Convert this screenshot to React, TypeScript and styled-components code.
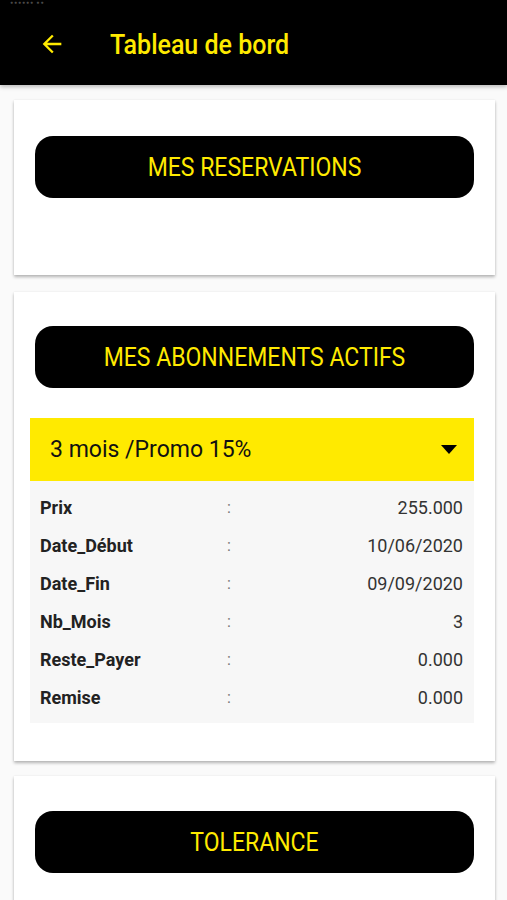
import * as React from 'react';
import styled, { createGlobalStyle } from 'styled-components';

const YELLOW = '#ffea00';

const GlobalStyle = createGlobalStyle`
	html, body {
		margin: 0;
		padding: 0;
		background: #fafafa;
		font-family: Roboto, 'Liberation Sans', Arial, sans-serif;
	}
	* { box-sizing: border-box; }
`;

const Screen = styled.div`
	width: 507px;
	min-height: 900px;
	background: #fafafa;
	overflow: hidden;
`;

const Header = styled.header`
	height: 85px;
	background: #000;
	display: flex;
	align-items: center;
	padding: 3px 0 0 38px;
	position: relative;
	box-shadow: 0 2px 4px rgba(0, 0, 0, 0.25);
`;

const StatusText = styled.span`
	position: absolute;
	top: 0;
	left: 10px;
	font-size: 5px;
	line-height: 5px;
	letter-spacing: 1px;
	color: #4a4a4a;
`;

const Title = styled.h1`
	margin: 0 0 0 44px;
	font-size: 25px;
	font-weight: 500;
	color: ${YELLOW};
	line-height: 1;
	transform: scaleY(1.12);
`;

const Content = styled.main`
	display: flex;
	flex-direction: column;
	padding: 15px 12px 0 14px;
`;

const Card = styled.section<{ $pad: string; $gap?: number }>`
	background: #fff;
	box-shadow: 0 2px 3px rgba(0, 0, 0, 0.28), 0 0 2px rgba(0, 0, 0, 0.06);
	margin-top: ${p => p.$gap ?? 0}px;
	padding: ${p => p.$pad};
	display: flex;
	flex-direction: column;
`;

const PillButton = styled.button`
	height: 62px;
	margin: 0 21px;
	border: none;
	border-radius: 18px;
	background: #000;
	color: ${YELLOW};
	font-family: Roboto, 'Liberation Sans', Arial, sans-serif;
	font-size: 23px;
	font-weight: 400;
	cursor: pointer;
`;

const ButtonText = styled.span`
	display: inline-block;
	transform: scaleY(1.12);
`;

const Dropdown = styled.div`
	margin: 30px 21px 0 16px;
	height: 63px;
	background: ${YELLOW};
	display: flex;
	align-items: center;
	justify-content: space-between;
	padding: 0 17px 0 20px;
	font-size: 23px;
	color: #111;
`;

const Caret = styled.span`
	width: 0;
	height: 0;
	border-left: 8px solid transparent;
	border-right: 8px solid transparent;
	border-top: 9px solid #000;
`;

const DetailTable = styled.div`
	margin: 0 21px 0 16px;
	background: #f7f7f7;
	padding: 7px 11px 7px 10px;
	display: grid;
	grid-template-columns: 187px 12px 1fr;
	grid-auto-rows: 38px;
	align-items: center;
`;

const Label = styled.span`
	font-size: 18px;
	font-weight: 700;
	color: #222;
`;

const Colon = styled.span`
	font-size: 16px;
	color: #777;
`;

const Value = styled.span`
	font-size: 18px;
	color: #333;
	text-align: right;
`;

const rows: [string, string][] = [
	['Prix', '255.000'],
	['Date_Début', '10/06/2020'],
	['Date_Fin', '09/09/2020'],
	['Nb_Mois', '3'],
	['Reste_Payer', '0.000'],
	['Remise', '0.000'],
];

const BackArrow = () => (
	<svg width="28" height="28" viewBox="0 0 24 24" fill={YELLOW}>
		<path d="M20 11H7.83l5.59-5.59L12 4l-8 8 8 8 1.41-1.41L7.83 13H20v-2z" />
	</svg>
);

const App: React.FunctionComponent = () => {
	return (
		<Screen>
			<GlobalStyle />
			<Header>
				<StatusText>●●●●●● ●●</StatusText>
				<BackArrow />
				<Title>Tableau de bord</Title>
			</Header>
			<Content>
				<Card $pad="36px 0 77px">
					<PillButton>
						<ButtonText>MES RESERVATIONS</ButtonText>
					</PillButton>
				</Card>
				<Card $gap={17} $pad="34px 0 38px">
					<PillButton>
						<ButtonText>MES ABONNEMENTS ACTIFS</ButtonText>
					</PillButton>
					<Dropdown>
						<span>3 mois /Promo 15%</span>
						<Caret />
					</Dropdown>
					<DetailTable>
						{rows.map(([label, value]) => (
							<React.Fragment key={label}>
								<Label>{label}</Label>
								<Colon>:</Colon>
								<Value>{value}</Value>
							</React.Fragment>
						))}
					</DetailTable>
				</Card>
				<Card $gap={15} $pad="35px 0 60px">
					<PillButton>
						<ButtonText>TOLERANCE</ButtonText>
					</PillButton>
				</Card>
			</Content>
		</Screen>
	);
};

export default App;
